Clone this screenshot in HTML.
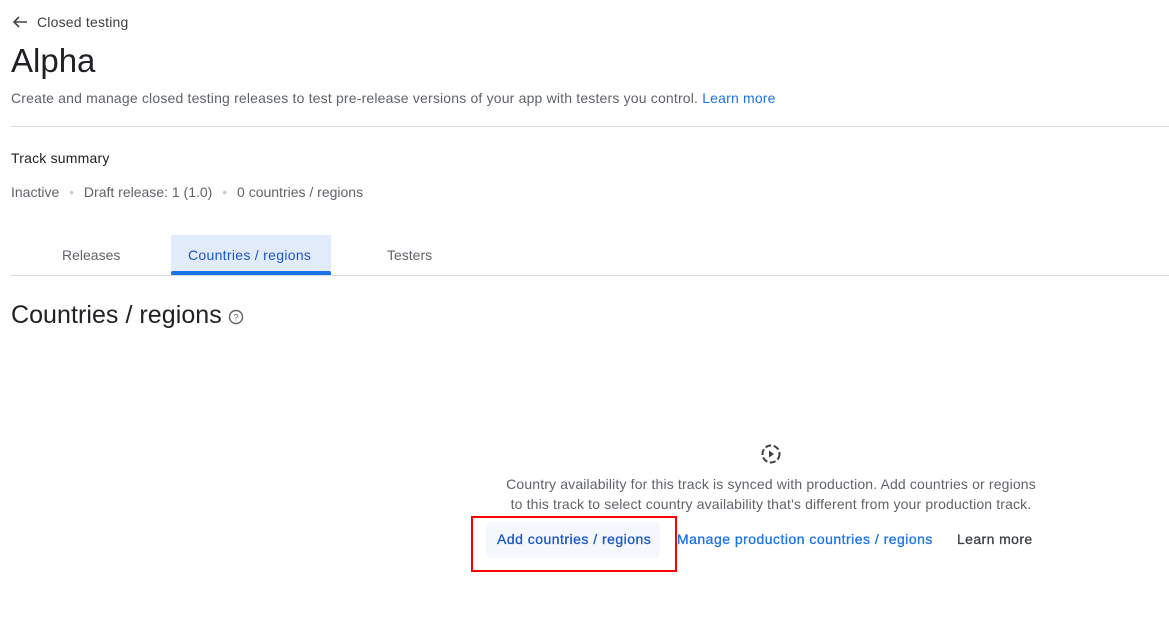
<!DOCTYPE html>
<html><head><style>
body{margin:0;width:1169px;height:623px;background:#fff;font-family:"Liberation Sans",sans-serif;position:relative;overflow:hidden;color:#202124}
.a{position:absolute;white-space:nowrap}
.b{letter-spacing:0.48px;-webkit-text-stroke:0.3px currentColor}
</style></head><body>
<svg class="a" style="left:12px;top:15px" width="16" height="14" viewBox="0 0 16 14"><path d="M15 7H2M7 2L2 7l5 5" stroke="#444" stroke-width="1.6" fill="none"/></svg>
<div class="a" style="left:37px;top:14px;font-size:14px;color:#3c4043;letter-spacing:0.2px">Closed testing</div>
<div class="a" style="left:11px;top:42px;font-size:33px;color:#202124">Alpha</div>
<div class="a" style="left:11px;top:90px;font-size:14px;color:#5f6368;letter-spacing:0.18px">Create and manage closed testing releases to test pre-release versions of your app with testers you control. <span style="color:#1a73e8">Learn more</span></div>
<div class="a" style="left:11px;top:126px;width:1158px;height:1px;background:#dadce0"></div>
<div class="a" style="left:11px;top:150px;font-size:14px;color:#202124;letter-spacing:0.2px">Track summary</div>
<div class="a" style="left:11px;top:184px;font-size:14px;color:#5f6368">Inactive <span style="color:#ccc;margin:0 6px">•</span> Draft release: 1 (1.0) <span style="color:#ccc;margin:0 6px">•</span> 0 countries / regions</div>
<div class="a" style="left:171px;top:235px;width:160px;height:37px;background:#e1ebfa"></div>
<div class="a" style="left:171px;top:271px;width:160px;height:4px;background:#1a73e8;border-radius:2px 2px 0 0"></div>
<div class="a" style="left:11px;top:275px;width:1158px;height:1px;background:#dadce0"></div>
<div class="a" style="left:62px;top:247px;font-size:14px;color:#5f6368">Releases</div>
<div class="a" style="left:188px;top:247px;font-size:14px;color:#1a56c8;letter-spacing:0.3px">Countries / regions</div>
<div class="a" style="left:387px;top:247px;font-size:14px;color:#5f6368">Testers</div>
<div class="a" style="left:11px;top:301px;font-size:25px;color:#202124;letter-spacing:0.05px">Countries / regions</div>
<svg class="a" style="left:228px;top:309px" width="16" height="16" viewBox="0 0 16 16"><circle cx="8" cy="8" r="6.5" stroke="#5f6368" stroke-width="1.4" fill="none"/><text x="8" y="11.5" font-size="9" text-anchor="middle" fill="#5f6368" font-family="Liberation Sans">?</text></svg>
<svg class="a" style="left:760px;top:443px" width="22" height="22" viewBox="0 0 22 22"><circle cx="11" cy="11" r="8.5" stroke="#3c4043" stroke-width="2" fill="none" stroke-dasharray="6 2.5"/><path d="M9 7.5v7l5-3.5z" fill="#3c4043"/></svg>
<div class="a" style="left:496px;top:474px;width:550px;text-align:center;font-size:14px;line-height:20px;color:#5f6368;white-space:normal;letter-spacing:0.15px">Country availability for this track is synced with production. Add countries or regions<br>to this track to select country availability that's different from your production track.</div>
<div class="a" style="left:486px;top:522px;width:174px;height:36px;background:#f4f7fc;border-radius:4px"></div>
<div class="a b" style="left:497px;top:531px;font-size:14px;color:#1a56c8">Add countries / regions</div>
<div class="a" style="left:471px;top:516px;width:202px;height:52px;border:2px solid #f00"></div>
<div class="a b" style="left:677px;top:531px;font-size:14px;color:#1a73e8">Manage production countries / regions</div>
<div class="a b" style="left:957px;top:531px;font-size:14px;color:#3c4043;letter-spacing:0.4px">Learn more</div>
</body></html>
